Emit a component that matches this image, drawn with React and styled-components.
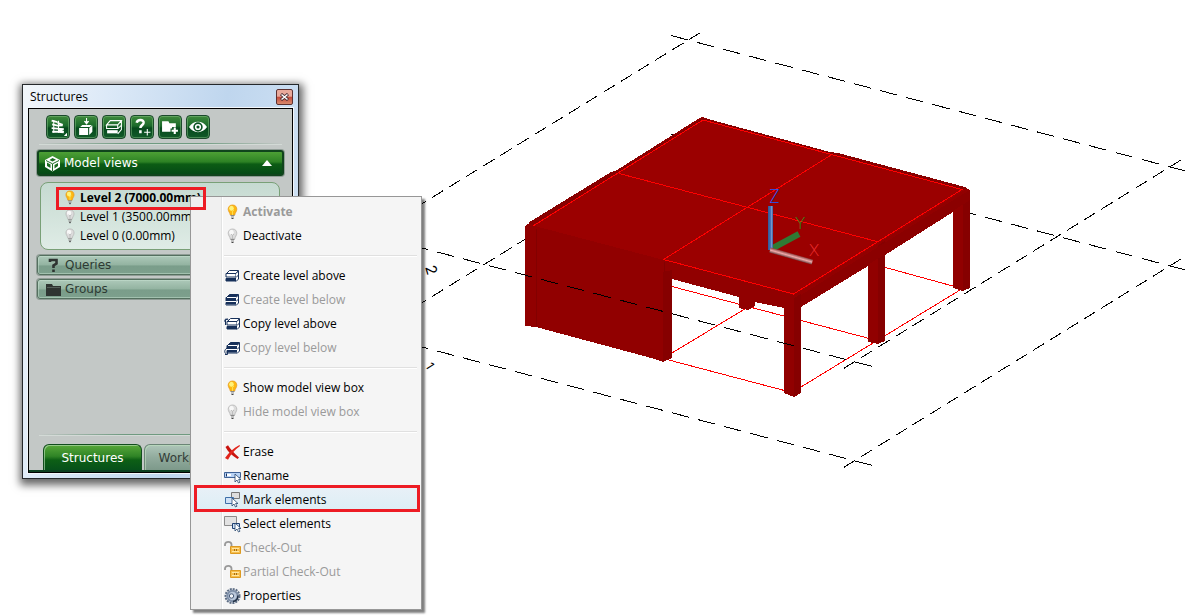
import React from "react";
import styled, { createGlobalStyle, css } from "styled-components";

const UI = '"Open Sans", "Noto Sans", sans-serif';
const CAPTION = '"DejaVu Sans", Verdana, sans-serif';

const GlobalStyle = createGlobalStyle`
  * {
    box-sizing: border-box;
  }

  body {
    margin: 0;
    background: #fff;
    font-family: ${UI};
    font-size: 12px;
    color: #000;
  }

  button {
    margin: 0;
    padding: 0;
    border: 0;
    background: none;
    font: inherit;
    color: inherit;
    text-align: left;
  }
`;

const Desktop = styled.main`
  position: relative;
  min-height: 100vh;
  overflow: hidden;
`;

const Drawing = styled.svg`
  display: block;
`;

const Palette = styled.section`
  position: absolute;
  left: 22px;
  top: 84px;
  width: 277px;
  display: flex;
  flex-direction: column;
  padding: 0 5px 5px;
  border: 1px solid #25282b;
  background: linear-gradient(100deg, #f2f6fa 0, #dce9f7 25%, #bfd6ee 60%, #d5e5f5 100%);
  box-shadow: 1px 3px 8px 3px rgba(0, 0, 0, 0.6);
`;

const TitleBar = styled.header`
  display: flex;
  align-items: center;
  justify-content: space-between;
  height: 23px;
  padding: 0 0 0 2px;
`;

const Title = styled.h1`
  margin: 0;
  font-size: 12px;
  line-height: 16px;
  font-weight: 400;
`;

const CloseButton = styled.button`
  display: grid;
  place-items: center;
  width: 17px;
  height: 16px;
  border: 1px solid #5c3030;
  border-radius: 2px;
  background: linear-gradient(#e9a99b 0 45%, #c4493a 50%, #d88a6c);
`;

const Body = styled.div`
  display: flex;
  flex-direction: column;
  height: 365px;
  border: 1px solid #000;
  box-shadow: 0 0 0 1px #f2f6fa;
  background: #c3c8c6;
`;

const Toolbar = styled.div`
  display: flex;
  gap: 4px;
  margin: 6px 17px 4px;
`;

const ToolButton = styled.button`
  display: grid;
  place-items: center;
  width: 24px;
  height: 24px;
  border: 1px solid #1c4a2c;
  border-radius: 4px;
  background: linear-gradient(#3f8a3c, #1b6a2b 45%, #064a1c 55%, #125a2a);
  box-shadow: inset 0 0 0 1px rgba(130, 190, 130, 0.5);
`;

const Rule = styled.div`
  height: 2px;
  margin: 0 10px;
  background: linear-gradient(90deg, #c3c8c6, #6f9a80 35%, #6f9a80 65%, #c3c8c6);
  border-bottom: 1px solid #d3dad6;
`;

const PanelHeader = styled.button`
  display: flex;
  align-items: center;
  gap: 3px;
  height: 20px;
  margin: 0 8px 4px;
  padding: 0 10px 0 7px;
  border: 1px solid #54705f;
  border-radius: 3px;
  font-family: ${CAPTION};
  color: #2d3a33;
  background: linear-gradient(#adc9b9, #93b3a1 50%, #7a9d8a 55%, #7da08d);
  box-shadow: inset 0 0 0 1px rgba(200, 225, 210, 0.5), 0 0 0 1px #8f9c95;

  ${p =>
    p.$open &&
    css`
      height: 26px;
      margin-top: 5px;
      margin-bottom: 6px;
      padding-left: 5px;
      color: #fff;
      border: 2px solid #10441c;
      background: linear-gradient(#4da035, #2d8224 45%, #0c5c14 55%, #054a16);
      box-shadow: 0 0 0 1px #8f9c95;
    `}
`;

const HeaderLabel = styled.span`
  flex: 1;
  line-height: 16px;
`;

const LevelList = styled.div`
  display: flex;
  flex-direction: column;
  margin: 0 12px 5px 11px;
  padding: 5px 16px 4px;
  border: 1px solid #79a077;
  border-radius: 8px;
  background: linear-gradient(#c6dad1, #dfece6);
`;

const Level = styled.button`
  display: flex;
  align-items: center;
  gap: 2px;
  height: 19px;
  padding-left: 5px;
  white-space: nowrap;
  line-height: 16px;
  font-weight: ${p => (p.$active ? 700 : 400)};
`;

const Footer = styled.div`
  margin-top: auto;
`;

const Tabs = styled.div`
  display: flex;
  gap: 2px;
  margin-top: 8px;
  padding: 0 14px;
  border-bottom: 2px solid #0b3f1f;
`;

const Tab = styled.button`
  min-width: 99px;
  height: 26px;
  padding: 0 11px;
  text-align: center;
  font-family: ${CAPTION};
  border: 1px solid ${p => (p.$active ? "#124d1e" : "#6b8576")};
  border-bottom: 0;
  border-radius: 6px 6px 0 0;
  color: ${p => (p.$active ? "#fff" : "#333c37")};
  background: ${p =>
    p.$active
      ? "linear-gradient(#58a83a, #2f8426 45%, #0d5f15 60%, #06501a)"
      : "linear-gradient(#aec5b9, #91ab9d 50%, #7d998a)"};
  box-shadow: inset 1px 1px 0 rgba(190, 225, 190, 0.6);
`;

const Menu = styled.div`
  position: absolute;
  left: 190px;
  top: 196px;
  width: 232px;
  display: flex;
  flex-direction: column;
  padding: 3px 1px 1px;
  border: 1px solid #979797;
  background: linear-gradient(90deg, #f0f0f0 30px, #e2e3e3 30px 31px, #fff 31px 32px, #f5f5f5 32px);
  box-shadow: 3px 3px 2px rgba(0, 0, 0, 0.5);
`;

const MenuItem = styled.button`
  position: relative;
  display: flex;
  align-items: center;
  gap: 2px;
  height: 24px;
  padding-left: 32px;
  line-height: 16px;
  white-space: nowrap;
  font-weight: ${p => (p.$strong ? 700 : 400)};

  &:disabled {
    color: #9a9a9a;
  }

  ${p =>
    p.$marked &&
    css`
      background: linear-gradient(#e8f0f7, #dbeef5);

      &::after {
        content: "";
        position: absolute;
        inset: -3px 0 0 2px;
        border: 3px solid #ed1c24;
      }
    `}
`;

const Divider = styled.hr`
  height: 2px;
  margin: 7px 3px 7px 32px;
  border: 0;
  border-top: 1px solid #e0e0e0;
  border-bottom: 1px solid #fff;
`;

const LevelMark = styled.div`
  position: absolute;
  left: 56px;
  top: 187px;
  width: 150px;
  height: 23px;
  border: 3px solid #ed1c24;
  pointer-events: none;
`;

const Icon = ({ size = 17, children }) => (
  <svg width={size} height={size} viewBox="0 0 17 17" fill="none" aria-hidden="true">
    {children}
  </svg>
);

const Bulb = ({ on, size }) => (
  <Icon size={size}>
    <path
      d="M8.500 1C5.500 1 4.200 3 4.200 5.300c0 2 1.800 3.500 2.100 5.700h4.400c.3-2.200 2.100-3.700 2.100-5.700C12.800 3 11.500 1 8.500 1z"
      fill={on ? "#fdb813" : "#dcdcdc"}
      stroke={on ? "#e79a1a" : "#b5b5b5"}
      strokeWidth=".8"
    />
    <ellipse cx="7.500" cy="4.300" rx="2.300" ry="2.500" fill={on ? "#fff27a" : "#f8f8f8"} />
    <path d="M7 6l1.500 1.500L10 6M8.500 7.500V11" stroke={on ? "#ffe95c" : "#b5b5b5"} strokeWidth=".8" />
    <path d="M6.500 11.500h4M7 13h3" stroke="#8a8a8a" />
    <path d="M7.500 14.500h2" stroke="#444" />
  </Icon>
);

const NAVY = "#17305a";

const LevelIcon = ({ below, copy }) => (
  <Icon>
    <g stroke={NAVY} transform={copy ? "translate(1 -1)" : "translate(0 -1)"}>
      <path d="M2.500 6.500L5.500 3.500h9L12 6.500z" fill={below ? NAVY : "#fff"} />
      <path d="M2 6.500h10V10H2z" fill={below ? NAVY : "#fff"} />
      <path d="M2 11.500h10v2.500H2z" fill={NAVY} />
      <path d="M12 6.500L14.500 4v8L12 14.500M12 10.500L14.500 8" fill="#fff" />
      {below && <path d="M3 6.500h9M2 10.500h10" stroke="#fff" />}
      {below && <path d="M2 14h10" stroke="#8593aa" />}
    </g>
    {copy && (
      <path d={below ? "M3 8C0 10 0 13 3 14.500M1 14.500h2.500V12" : "M1.500 9V4l2-1.500M.5 5.500l1-2.500 3 1"} stroke={NAVY} />
    )}
  </Icon>
);

const Pointer = ({ x = 11, y = 7 }) => (
  <path
    transform={`translate(${x} ${y})`}
    d="M0 0v8l2-2 1.500 3 1.500-.8L3.600 5.500H6z"
    fill="#fff"
    stroke="#26466f"
    strokeWidth=".8"
  />
);

const EraseIcon = () => (
  <Icon>
    <path d="M1.500 3L4 1.300c2 3.500 6 8 11 12.200L13.500 15C8 11.500 3.500 7.500 1.500 3z" fill="#c9140f" />
    <path d="M15.500 1l.5 1C10.500 6 7 10 4 15.700L1 14C5 8.500 9.500 4 15.500 1z" fill="#e2251c" />
  </Icon>
);

const RenameIcon = () => (
  <Icon>
    <path d="M.5 4.500h16v5H.5z" fill="#b9d3f5" stroke="#3f6296" />
    <path d="M2 7h5" stroke="#fff" strokeWidth="2" />
    <path d="M2.500 5.500v3" stroke={NAVY} />
    <Pointer x={11} y={6} />
  </Icon>
);

const MarkIcon = () => (
  <Icon>
    <path d="M7.500 .5h8v6h-8z" fill="#dedede" stroke="#777" />
    <path d="M1.500 5.500h8v6h-8z" fill="#cfe2f7" stroke="#3f6fa8" />
    <Pointer x={8} y={6} />
  </Icon>
);

const SelectIcon = () => (
  <Icon>
    <path d="M.5 .5h12v9H.5z" fill="#e2e2e2" stroke="#8b8b8b" />
    <path d="M8.500 7.500h7v5h-7z" fill="#cfe2f7" stroke="#1e3e70" />
    <Pointer x={11} y={7} />
  </Icon>
);

const LockIcon = () => (
  <Icon>
    <path d="M1 6V4.500c0-3.500 6.500-3.500 6.500 0V7" stroke="#999" strokeWidth="1.800" />
    <path d="M6.500 6.500h10v7h-10z" fill="#f7bd4b" stroke="#dc9a22" />
    <path d="M8 8.500h7M8 11.500h7" stroke="#ffe6a1" />
    <path d="M10.500 9v2M12.500 9v2" stroke="#a66d12" />
  </Icon>
);

const GearIcon = () => (
  <Icon>
    <circle cx="8.500" cy="8" r="7" stroke="#5d6d84" strokeWidth="2" strokeDasharray="2 1" />
    <circle cx="8.500" cy="8" r="5.200" fill="#b9c7da" stroke="#7e8fa8" strokeWidth="2" />
    <circle cx="7.500" cy="8" r="2.200" fill="#f1f5fa" stroke="#4a5c77" />
    <path d="M9 13.500c3-.5 5-3 5-6" stroke="#1f2d42" strokeWidth="1.500" />
  </Icon>
);

const CubeIcon = () => (
  <Icon>
    <path d="M8.500 1L16 5v7l-7.500 4.500L1 12V5z" fill="#fff" />
    <path d="M2 5.500l6.500 3.300 6.500-3.300M8.500 9v7" stroke="#1d6d22" />
    <path d="M3 7.500l3.500 2v3.500L3 11z" fill="#1d6d22" />
    <path d="M10.500 10l3.500-2v3l-3.500 2.500zM8.500 3L12 4.800 8.500 6.500 5.500 5z" fill="#1d6d22" />
  </Icon>
);

const FolderIcon = () => (
  <Icon>
    <path d="M1 3h6l1 2h8v10H1z" fill="#2e3431" />
    <path d="M2 6.500h13" stroke="#55605a" />
  </Icon>
);

const QueryIcon = () => (
  <Icon>
    <path d="M5 5V3h6.500v3.500L8.500 8.500v2.500M8.500 12.500v2.500" stroke="#2e3431" strokeWidth="2.600" />
  </Icon>
);

const tools = [
  {
    label: "Building",
    art: (
      <g>
        <path d="M4.500 2v12M9 2.500V14" stroke="#fff" />
        <path
          d="M2.500 2.500l5.500 1.500M3 6l5 1.200 5-.2M8 4.500l5 2M2.500 9.500l5.500.5 6 .5M3 13h5.500l5.500.5M9 11l5 2"
          stroke="#fff"
          strokeWidth="1.700"
        />
        <path d="M17.500 13.500v4h-4z" fill="#fff" />
      </g>
    )
  },
  {
    label: "Box",
    art: (
      <g fill="#fff">
        <path d="M9 0v5M7 3l2 2.500L11 3" stroke="#fff" />
        <path d="M2 9.500h8.500V16H2zM3 8.500l2-2h9l-2 2zM11.500 9.500l3-2.500v6l-3 3z" />
      </g>
    )
  },
  {
    label: "Level",
    art: (
      <g stroke="#fff">
        <path d="M1.500 6.500L5 2.500h10.500L12 6.500zM1.500 6.500V10H12V6.500M15.500 2.500V11L12 15" />
        <path d="M2 13h10" strokeWidth="3" />
        <path d="M12 10l3.500-3" />
      </g>
    )
  },
  {
    label: "Add query",
    art: (
      <g stroke="#fff">
        <path d="M3.500 4.500C4 1 10.500 1 10 4.500 9.500 7 7 7 7 9.500M7 11.500v3" strokeWidth="2.400" />
        <path d="M10.500 13.500h6M13.500 10.500v6" />
      </g>
    )
  },
  {
    label: "Add group",
    art: (
      <g>
        <path d="M1 3h6l1 2h6v8H1z" fill="#fff" />
        <path d="M9 12h7M12.500 8.500v7" stroke="#0b5322" strokeWidth="4" />
        <path d="M10 12h6M13 9v6" stroke="#fff" strokeWidth="2" />
      </g>
    )
  },
  {
    label: "Show",
    art: (
      <g>
        <path d="M0 8.500C4 2 13 2 17 8.500 13 15 4 15 0 8.500z" fill="#fff" />
        <circle cx="8.500" cy="8.500" r="3.700" fill="#fff" stroke="#0b5322" strokeWidth="1.500" />
        <circle cx="8.500" cy="8.500" r="1.500" fill="#0b5322" />
      </g>
    )
  }
];

const levels = [
  { name: "Level 2 (7000.00mm)", active: true },
  { name: "Level 1 (3500.00mm)" },
  { name: "Level 0 (0.00mm)" }
];

const menuGroups = [
  [
    { label: "Activate", icon: <Bulb on />, disabled: true, strong: true },
    { label: "Deactivate", icon: <Bulb /> }
  ],
  [
    { label: "Create level above", icon: <LevelIcon /> },
    { label: "Create level below", icon: <LevelIcon below />, disabled: true },
    { label: "Copy level above", icon: <LevelIcon copy /> },
    { label: "Copy level below", icon: <LevelIcon below copy />, disabled: true }
  ],
  [
    { label: "Show model view box", icon: <Bulb on /> },
    { label: "Hide model view box", icon: <Bulb />, disabled: true }
  ],
  [
    { label: "Erase", icon: <EraseIcon /> },
    { label: "Rename", icon: <RenameIcon /> },
    { label: "Mark elements", icon: <MarkIcon />, marked: true },
    { label: "Select elements", icon: <SelectIcon /> },
    { label: "Check-Out", icon: <LockIcon />, disabled: true },
    { label: "Partial Check-Out", icon: <LockIcon />, disabled: true },
    { label: "Properties", icon: <GearIcon /> }
  ]
];

const Model = () => (
  <Drawing width="1199" height="615" viewBox="0 0 1199 615" fill="none" role="img" aria-label="Model">
    <defs>
      <linearGradient id="axisX" x1="0" y1="0" x2="0" y2="1">
        <stop offset="0" stopColor="#8e4444" />
        <stop offset=".5" stopColor="#efaaaa" />
        <stop offset="1" stopColor="#6e4444" />
      </linearGradient>
      <linearGradient id="axisZ">
        <stop offset="0" stopColor="#2f5795" />
        <stop offset=".5" stopColor="#4672b5" />
        <stop offset=".6" stopColor="#86a9dd" />
        <stop offset="1" stopColor="#3a5f9c" />
      </linearGradient>
    </defs>

    <g stroke="#000" shapeRendering="crispEdges">
      <g strokeDasharray="17.6 9.44">
        <path d="M671 35.500L1187.500 171.500" />
        <path d="M671 134.500L1187.500 270.500" />
        <path d="M410.500 344L872.500 465.500" />
      </g>
      <g strokeDasharray="13.2 6.95">
        <path d="M700.500 32.500L415 208" />
        <path d="M700.500 131.500L415 307" />
        <path d="M1181 160L842 369.500" />
        <path d="M1181 259L842 468.500" />
      </g>
    </g>

    <g stroke="#f00" shapeRendering="crispEdges">
      <path d="M665 359L790 392M670 286L875 340M672 353L748 307" />
      <path d="M880 266L960 288M796 390L960 290" />
    </g>

    <g shapeRendering="crispEdges">
      <path
        fill="#910000"
        d="M525 226l5-3 5-1 76-50 6-2 81-51 4-2 6 2 122 33 8 1 127 34 5 3v98l-7 3-10-3v-76l-68 43v86l-7 3-10-2v-76l-67 41v86l-7 4-10-4v-85l-29-6v4l-7 4-9-2v-11l-67-18v79l-9 4-8-3-119-32-11-1z"
      />
      <path fill="#9b0000" d="M531 225L703 119 966 189 794 295 664 260z" />
      <path fill="#870000" d="M611 172l6-2 85-52 6 1 122 33 8 1 127 34 2 2-4 1-260-70-170 105-5-2z" />
      <path fill="#860000" d="M663 272l9-2v87l-9 4z" />
      <path fill="#860000" d="M794 298l7-4v98l-7 4zM878 245l7-4v99l-7 3zM963 194l7-4v98l-7 3z" />
      <path fill="#8b0000" d="M801 295l162-101 7-4v10l-17 11-68 43-17 11-67 41z" />
      <path stroke="#830000" d="M536.500 229v97M664.500 262v10" />
    </g>

    <path
      d="M533 226L703 120 962 189.500 793.500 294 663.500 259.500 832 154.500M619 173.500L877 241.500"
      stroke="#f00"
      shapeRendering="crispEdges"
    />
    <path
      d="M410.500 245L872.500 366.500"
      stroke="#000"
      strokeDasharray="17.6 9.44"
      shapeRendering="crispEdges"
    />

    <path d="M773 248L799 234" stroke="#2f7a34" strokeWidth="6" />
    <path d="M768 206h5v44h-5z" fill="url(#axisZ)" />
    <g transform="translate(770 250) rotate(16)">
      <path d="M0-2.500h44v5H0z" fill="url(#axisX)" />
    </g>

    <g fontFamily="Inter, sans-serif" fontWeight="200">
      <text x="769" y="203" fontSize="18" fill="#1a5cff">Z</text>
      <text x="795" y="229" fontSize="16" fill="#1fa01f">Y</text>
      <text x="809" y="256" fontSize="16" fill="#f03030">X</text>
      <g fill="#000" fontWeight="400">
        <text transform="translate(425 267) rotate(74)" fontSize="15">2</text>
        <text transform="translate(425 366) rotate(58)" fontSize="12">1</text>
      </g>
    </g>
  </Drawing>
);

const StructuresPalette = () => (
  <Palette aria-label="Structures">
    <TitleBar>
      <Title>Structures</Title>
      <CloseButton aria-label="Close">
        <svg width="9" height="8" viewBox="0 0 9 8" fill="none">
          <path d="M1 1l7 6M8 1L1 7" stroke="#4a2d33" strokeWidth="3" />
          <path d="M1.500 1.500l6 5M7.500 1.500l-6 5" stroke="#fff" strokeWidth="1.500" />
        </svg>
      </CloseButton>
    </TitleBar>
    <Body>
      <Toolbar role="toolbar">
        {tools.map(tool => (
          <ToolButton key={tool.label} aria-label={tool.label}>
            <Icon size={18}>{tool.art}</Icon>
          </ToolButton>
        ))}
      </Toolbar>
      <Rule />
      <PanelHeader $open aria-expanded="true">
        <CubeIcon />
        <HeaderLabel>Model views</HeaderLabel>
        <svg width="10" height="6" viewBox="0 0 10 6">
          <path d="M5 0l5 6H0z" fill="#fff" />
        </svg>
      </PanelHeader>
      <LevelList>
        {levels.map(level => (
          <Level key={level.name} $active={level.active}>
            <Bulb on={level.active} size={16} />
            {level.name}
          </Level>
        ))}
      </LevelList>
      <PanelHeader aria-expanded="false">
        <QueryIcon />
        <HeaderLabel>Queries</HeaderLabel>
      </PanelHeader>
      <PanelHeader aria-expanded="false">
        <FolderIcon />
        <HeaderLabel>Groups</HeaderLabel>
      </PanelHeader>
      <Footer>
        <Rule />
        <Tabs role="tablist">
          <Tab role="tab" aria-selected="true" $active>
            Structures
          </Tab>
          <Tab role="tab" aria-selected="false">
            Workplanes
          </Tab>
        </Tabs>
      </Footer>
    </Body>
  </Palette>
);

const ContextMenu = () => (
  <Menu role="menu">
    {menuGroups.map((group, i) => (
      <React.Fragment key={i}>
        {i > 0 && <Divider />}
        {group.map(item => (
          <MenuItem
            key={item.label}
            role="menuitem"
            disabled={item.disabled}
            $strong={item.strong}
            $marked={item.marked}
          >
            {item.icon}
            {item.label}
          </MenuItem>
        ))}
      </React.Fragment>
    ))}
  </Menu>
);

export default function App() {
  return (
    <Desktop>
      <GlobalStyle />
      <Model />
      <StructuresPalette />
      <ContextMenu />
      <LevelMark />
    </Desktop>
  );
}
